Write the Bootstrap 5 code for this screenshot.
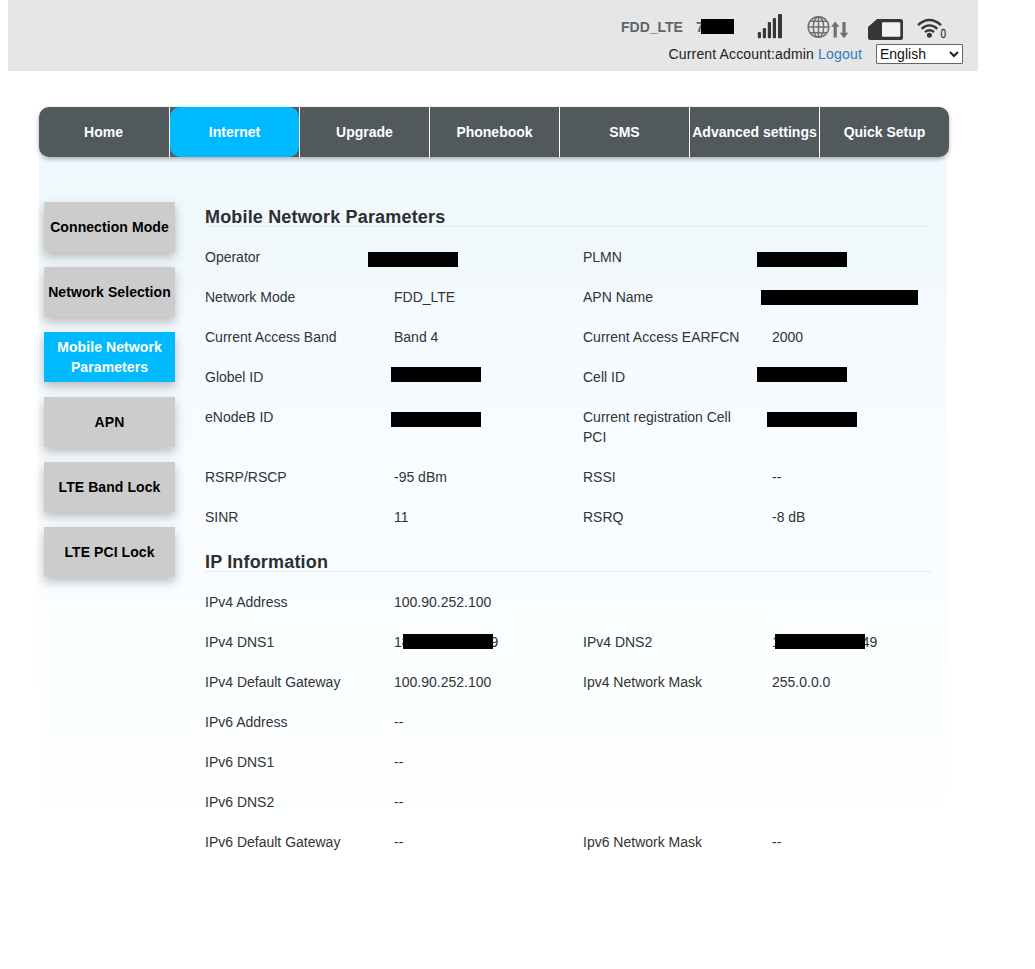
<!DOCTYPE html>
<html lang="en">
<head>
<meta charset="utf-8">
<title>Mobile Network Parameters</title>
<meta name="viewport" content="width=device-width, initial-scale=1">
<link href="https://cdn.jsdelivr.net/npm/bootstrap@5.3.0/dist/css/bootstrap.min.css" rel="stylesheet">
<style>
  body { font-family: "Liberation Sans", Arial, sans-serif; font-size: 14px; line-height: 20px; color: #333; background: #fff; }
  .page { width: 970px; margin-left: 8px; }
  .topbar { height: 71px; background: #e6e6e6; padding-top: 13px; }
  .status { height: 31px; padding-left: 613px; color: #5f6568; }
  .status svg { flex: none; display: block; }
  .status-label { width: 75px; padding-top: 4px; }
  .status-time { width: 61px; padding-top: 4px; }
  .account { height: 20px; padding-right: 15px; color: #222; }
  .account > span { letter-spacing: .14px; }
  .account a { color: #2f7cc4; text-decoration: none; margin: 0 14px 0 4px; letter-spacing: .2px; }
  .lang { width: 87px; height: 20px; padding: 0 3px; line-height: 18px; color: #111; background: #fff; border: 1px solid #666; border-radius: 1px; }
  .shell { width: 910px; margin: 36px 0 0 31px; }
  .main-nav { height: 50px; border-radius: 10px; background: #51595c; box-shadow: 0 2px 4px rgba(0,0,0,.3); position: relative; }
  .main-nav .nav-link { height: 50px; padding: 0; line-height: 50px; color: #fff; font-weight: bold; text-align: center; white-space: nowrap; border-radius: 10px; }
  .main-nav .nav-item { flex: none; width: 130px; border-right: 1px solid #fff; }
  .main-nav .nav-item:first-child { width: 131px; padding-right: 1px; }
  .main-nav .nav-item:last-child { width: 129px; border-right: 0; }
  .main-nav .nav-link.active { background: #00baff; }
  .panel { width: 908px; height: 703px; padding: 45px 16px 0 5px; background: linear-gradient(#eff8fc 0, #f0f8fc 90px, #f5faff 170px, #f9fdff 400px, #fafeff 500px, #fff 690px); }
  .side { width: 131px; gap: 15px; margin-right: 30px; flex: none; }
  .side a { height: 50px; background: #ccc; color: #000; font-weight: bold; text-align: center; text-decoration: none; letter-spacing: .08px; box-shadow: 0 5px 10px rgba(0,0,0,.25); }
  .side a.active { background: #00baff; color: #fff; }
  .side span { white-space: nowrap; }
  .content { width: 726px; flex: none; }
  .content h2 { height: 21px; margin: 0 0 20px; font-size: 18px; line-height: 22px; font-weight: bold; letter-spacing: .17px; color: #2d2f31; border-bottom: 1px solid #e6ebed; }
  .params { --bs-gutter-x: 30px; margin-bottom: 4px; }
  .params > div { margin-bottom: 20px; }
  .params > div.wide { padding-right: 8px; }
  .value { position: relative; min-height: 20px; white-space: nowrap; }
  .redact { position: absolute; height: 15px; width: 90px; background: #000; display: block; }
</style>
</head>
<body>
<div class="page">
  <header class="topbar">
    <div class="status d-flex fw-bold">
      <span class="status-label">FDD_LTE</span>
      <span class="status-time position-relative">7<i class="redact" style="left:5px;top:6px;width:33px"></i></span>
      <svg width="50" height="29" viewBox="757 13 50 29" fill="#373737">
        <rect x="757.8" y="32" width="3.2" height="6.3" rx="1"/><rect x="762.8" y="28" width="3.2" height="10.3" rx="1"/><rect x="767.8" y="22" width="3.2" height="16.3" rx="1"/><rect x="772.8" y="18" width="3.2" height="20.3" rx="1"/><rect x="778" y="14" width="4" height="24.3" rx="1"/>
      </svg>
      <svg width="61" height="29" viewBox="807 13 61 29" fill="none" stroke="#6c7174" stroke-width="1.5">
        <circle cx="818.5" cy="27" r="10.3"/><ellipse cx="818.5" cy="27" rx="5.2" ry="10.3"/><path d="M818.5 16.7v20.6M808.2 27h20.6M810 21.3h17M810 32.7h17"/>
        <path fill="#6c7174" stroke="none" d="M835.2 21.5l4.2 5.3h-2.6v10.7h-3.2V26.8H831zM844 38.2l-4.3-5.4h2.7V22h3.2v10.8h2.7z"/>
      </svg>
      <svg width="49" height="29" viewBox="868 13 49 29">
        <path fill="#373737" d="M877 19h23.5q2.5 0 2.5 2.5v16q0 2.5-2.5 2.5h-30q-2.5 0-2.5-2.5V27z"/><rect x="882" y="22.3" width="18.3" height="14.5" rx="1" fill="#f2f2f2"/>
      </svg>
      <svg width="32" height="29" viewBox="917 13 32 29" fill="none" stroke="#373737" stroke-width="2.4">
        <path d="M918 25.2Q923.5 20 929.5 20T941 25.2M921.7 28.8Q925.3 25.4 929.5 25.4T937.3 28.8M925 32Q927.2 30.3 929.5 30.3T934 32"/>
        <circle cx="929.4" cy="35.3" r="2.5" fill="#373737" stroke="none"/>
        <text x="940.6" y="38" font-size="12" textLength="5.6" lengthAdjust="spacingAndGlyphs" fill="#373737" stroke="#373737" stroke-width=".3" font-weight="normal">0</text>
      </svg>
    </div>
    <div class="account d-flex justify-content-end">
      <span>Current Account:admin</span><a href="#">Logout</a>
      <div class="lang d-flex justify-content-between align-items-center">
        <span>English</span>
        <svg width="10" height="7" viewBox="0 0 10 7" fill="none" stroke="#222" stroke-width="2"><path d="M1 1l4 4 4-4"/></svg>
      </div>
    </div>
  </header>

  <div class="shell">
    <ul class="nav main-nav flex-nowrap">
      <li class="nav-item"><a class="nav-link" href="#">Home</a></li>
      <li class="nav-item"><a class="nav-link active" href="#">Internet</a></li>
      <li class="nav-item"><a class="nav-link" href="#">Upgrade</a></li>
      <li class="nav-item"><a class="nav-link" href="#">Phonebook</a></li>
      <li class="nav-item"><a class="nav-link" href="#">SMS</a></li>
      <li class="nav-item"><a class="nav-link" href="#">Advanced settings</a></li>
      <li class="nav-item"><a class="nav-link" href="#">Quick Setup</a></li>
    </ul>
    <div class="panel d-flex">
      <nav class="side d-flex flex-column">
        <a class="d-flex align-items-center justify-content-center" href="#"><span>Connection Mode</span></a>
        <a class="d-flex align-items-center justify-content-center" href="#"><span>Network Selection</span></a>
        <a class="d-flex align-items-center justify-content-center active" href="#"><span>Mobile Network<br>Parameters</span></a>
        <a class="d-flex align-items-center justify-content-center" href="#"><span>APN</span></a>
        <a class="d-flex align-items-center justify-content-center" href="#"><span>LTE Band Lock</span></a>
        <a class="d-flex align-items-center justify-content-center" href="#"><span>LTE PCI Lock</span></a>
      </nav>
      <main class="content pt-1">
        <h2>Mobile Network Parameters</h2>
        <div class="row params">
          <div class="col-3">Operator</div><div class="col-3"><div class="value"><i class="redact" style="left:-26px;top:5px"></i></div></div>
          <div class="col-3">PLMN</div><div class="col-3"><div class="value"><i class="redact" style="left:-15px;top:5px"></i></div></div>
          <div class="col-3">Network Mode</div><div class="col-3">FDD_LTE</div>
          <div class="col-3">APN Name</div><div class="col-3"><div class="value"><i class="redact" style="left:-11px;top:3px;width:157px"></i></div></div>
          <div class="col-3">Current Access Band</div><div class="col-3">Band 4</div>
          <div class="col-3 wide">Current Access EARFCN</div><div class="col-3">2000</div>
          <div class="col-3">Globel ID</div><div class="col-3"><div class="value"><i class="redact" style="left:-3px;top:0"></i></div></div>
          <div class="col-3">Cell ID</div><div class="col-3"><div class="value"><i class="redact" style="left:-15px;top:0"></i></div></div>
          <div class="col-3">eNodeB ID</div><div class="col-3"><div class="value"><i class="redact" style="left:-3px;top:5px"></i></div></div>
          <div class="col-3">Current registration Cell PCI</div><div class="col-3"><div class="value"><i class="redact" style="left:-5px;top:5px"></i></div></div>
          <div class="col-3">RSRP/RSCP</div><div class="col-3">-95 dBm</div>
          <div class="col-3">RSSI</div><div class="col-3">--</div>
          <div class="col-3">SINR</div><div class="col-3">11</div>
          <div class="col-3">RSRQ</div><div class="col-3">-8 dB</div>
        </div>
        <h2>IP Information</h2>
        <div class="row params">
          <div class="col-3">IPv4 Address</div><div class="col-9">100.90.252.100</div>
          <div class="col-3">IPv4 DNS1</div><div class="col-3"><div class="value">18<span style="margin-left:81px">9</span><i class="redact" style="left:9px;top:2px"></i></div></div>
          <div class="col-3">IPv4 DNS2</div><div class="col-3"><div class="value">1<span style="margin-left:82px">49</span><i class="redact" style="left:3px;top:2px"></i></div></div>
          <div class="col-3">IPv4 Default Gateway</div><div class="col-3">100.90.252.100</div>
          <div class="col-3">Ipv4 Network Mask</div><div class="col-3">255.0.0.0</div>
          <div class="col-3">IPv6 Address</div><div class="col-9">--</div>
          <div class="col-3">IPv6 DNS1</div><div class="col-9">--</div>
          <div class="col-3">IPv6 DNS2</div><div class="col-9">--</div>
          <div class="col-3">IPv6 Default Gateway</div><div class="col-3">--</div>
          <div class="col-3">Ipv6 Network Mask</div><div class="col-3">--</div>
        </div>
      </main>
    </div>
  </div>
</div>
<script src="https://cdn.jsdelivr.net/npm/bootstrap@5.3.0/dist/js/bootstrap.bundle.min.js"></script>
</body>
</html>
